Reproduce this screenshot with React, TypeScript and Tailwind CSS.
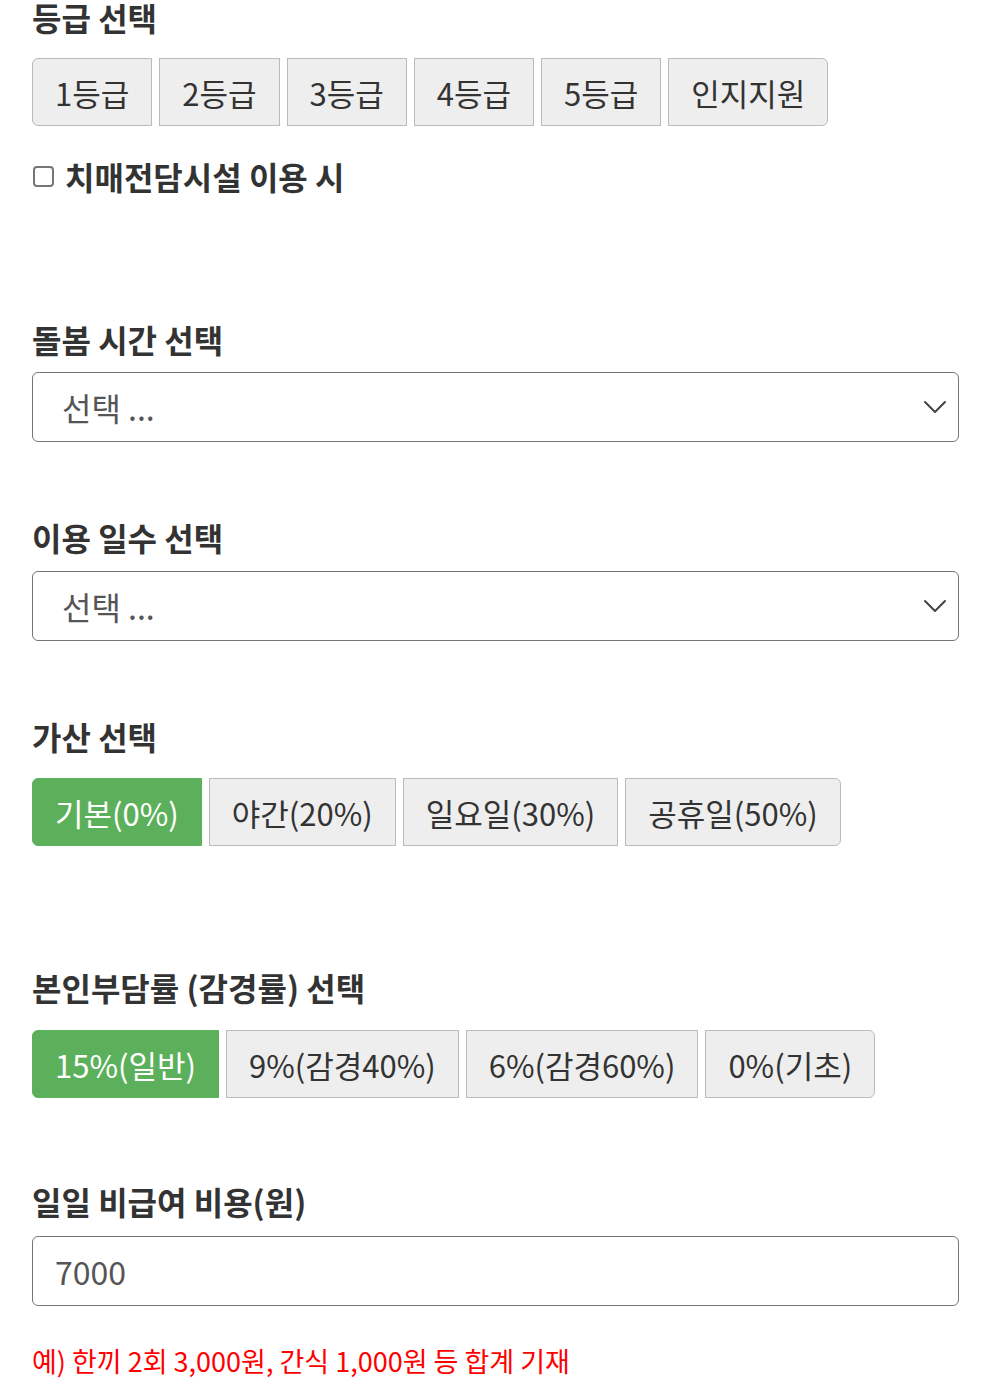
const font = { fontFamily: '"Noto Sans CJK KR", "Noto Sans", sans-serif' };

const grades = ["1등급", "2등급", "3등급", "4등급", "5등급", "인지지원"];
const extras = ["기본(0%)", "야간(20%)", "일요일(30%)", "공휴일(50%)"];
const rates = ["15%(일반)", "9%(감경40%)", "6%(감경60%)", "0%(기초)"];

function ToggleGroup({ items, active }: { items: string[]; active?: number }) {
  return (
    <div className="flex gap-[7px]">
      {items.map((label, i) => {
        const on = i === active;
        const first = i === 0;
        const last = i === items.length - 1;
        return (
          <button
            key={label}
            className={[
              "flex h-[68px] items-center px-[22px] text-[31px] leading-none border",
              on ? "bg-[#5cb05c] border-[#5cb05c] text-white" : "bg-[#eeeeee] border-[#bbbbbb] text-[#333333]",
              first ? "rounded-l-[6px]" : "",
              last ? "rounded-r-[6px]" : "",
            ].join(" ")}
          >
            {label}
          </button>
        );
      })}
    </div>
  );
}

function Heading({ children, className = "" }: { children: React.ReactNode; className?: string }) {
  return <h3 className={`text-[32px] font-bold leading-[34px] text-[#333333] ${className}`}>{children}</h3>;
}

function SelectBox({ className = "" }: { className?: string }) {
  return (
    <div
      className={`flex h-[70px] w-[927px] items-center justify-between rounded-[6px] border border-[#6f767c] bg-white pl-[29px] pr-[11px] ${className}`}
    >
      <span className="text-[32px] leading-none text-[#555555]">선택 ...</span>
      <svg width="24" height="14" viewBox="0 0 24 14" fill="none">
        <path d="M2 2l10 10 10-10" stroke="#444" strokeWidth="2" strokeLinecap="round" strokeLinejoin="round" />
      </svg>
    </div>
  );
}

export default function App() {
  return (
    <div className="min-h-[1388px] bg-white pl-[32px]" style={font}>
      <div className="w-[927px]">
        <Heading>등급 선택</Heading>
        <div className="mt-[24px]">
          <ToggleGroup items={grades} />
        </div>

        <label className="mt-[33px] flex items-center gap-[11px]">
          <span className="ml-[1px] h-[21px] w-[21px] rounded-[4px] border-2 border-[#767676] bg-white" />
          <span className="text-[32px] font-bold leading-[34px] text-[#333333]">치매전담시설 이용 시</span>
        </label>

        <Heading className="mt-[129px]">돌봄 시간 선택</Heading>
        <SelectBox className="mt-[16px]" />

        <Heading className="mt-[78px]">이용 일수 선택</Heading>
        <SelectBox className="mt-[17px]" />

        <Heading className="mt-[78px]">가산 선택</Heading>
        <div className="mt-[25px]">
          <ToggleGroup items={extras} active={0} />
        </div>

        <Heading className="mt-[124px]">본인부담률 (감경률) 선택</Heading>
        <div className="mt-[26px]">
          <ToggleGroup items={rates} active={0} />
        </div>

        <Heading className="mt-[86px]">일일 비급여 비용(원)</Heading>
        <div className="mt-[18px] flex h-[70px] w-[927px] items-center rounded-[6px] border border-[#6f767c] bg-white pl-[22px]">
          <span className="text-[32px] leading-none text-[#555555]">7000</span>
        </div>

        <p className="mt-[39px] text-[27px] leading-[32px] text-[#ff0000]">
          예) 한끼 2회 3,000원, 간식 1,000원 등 합계 기재
        </p>
      </div>
    </div>
  );
}
